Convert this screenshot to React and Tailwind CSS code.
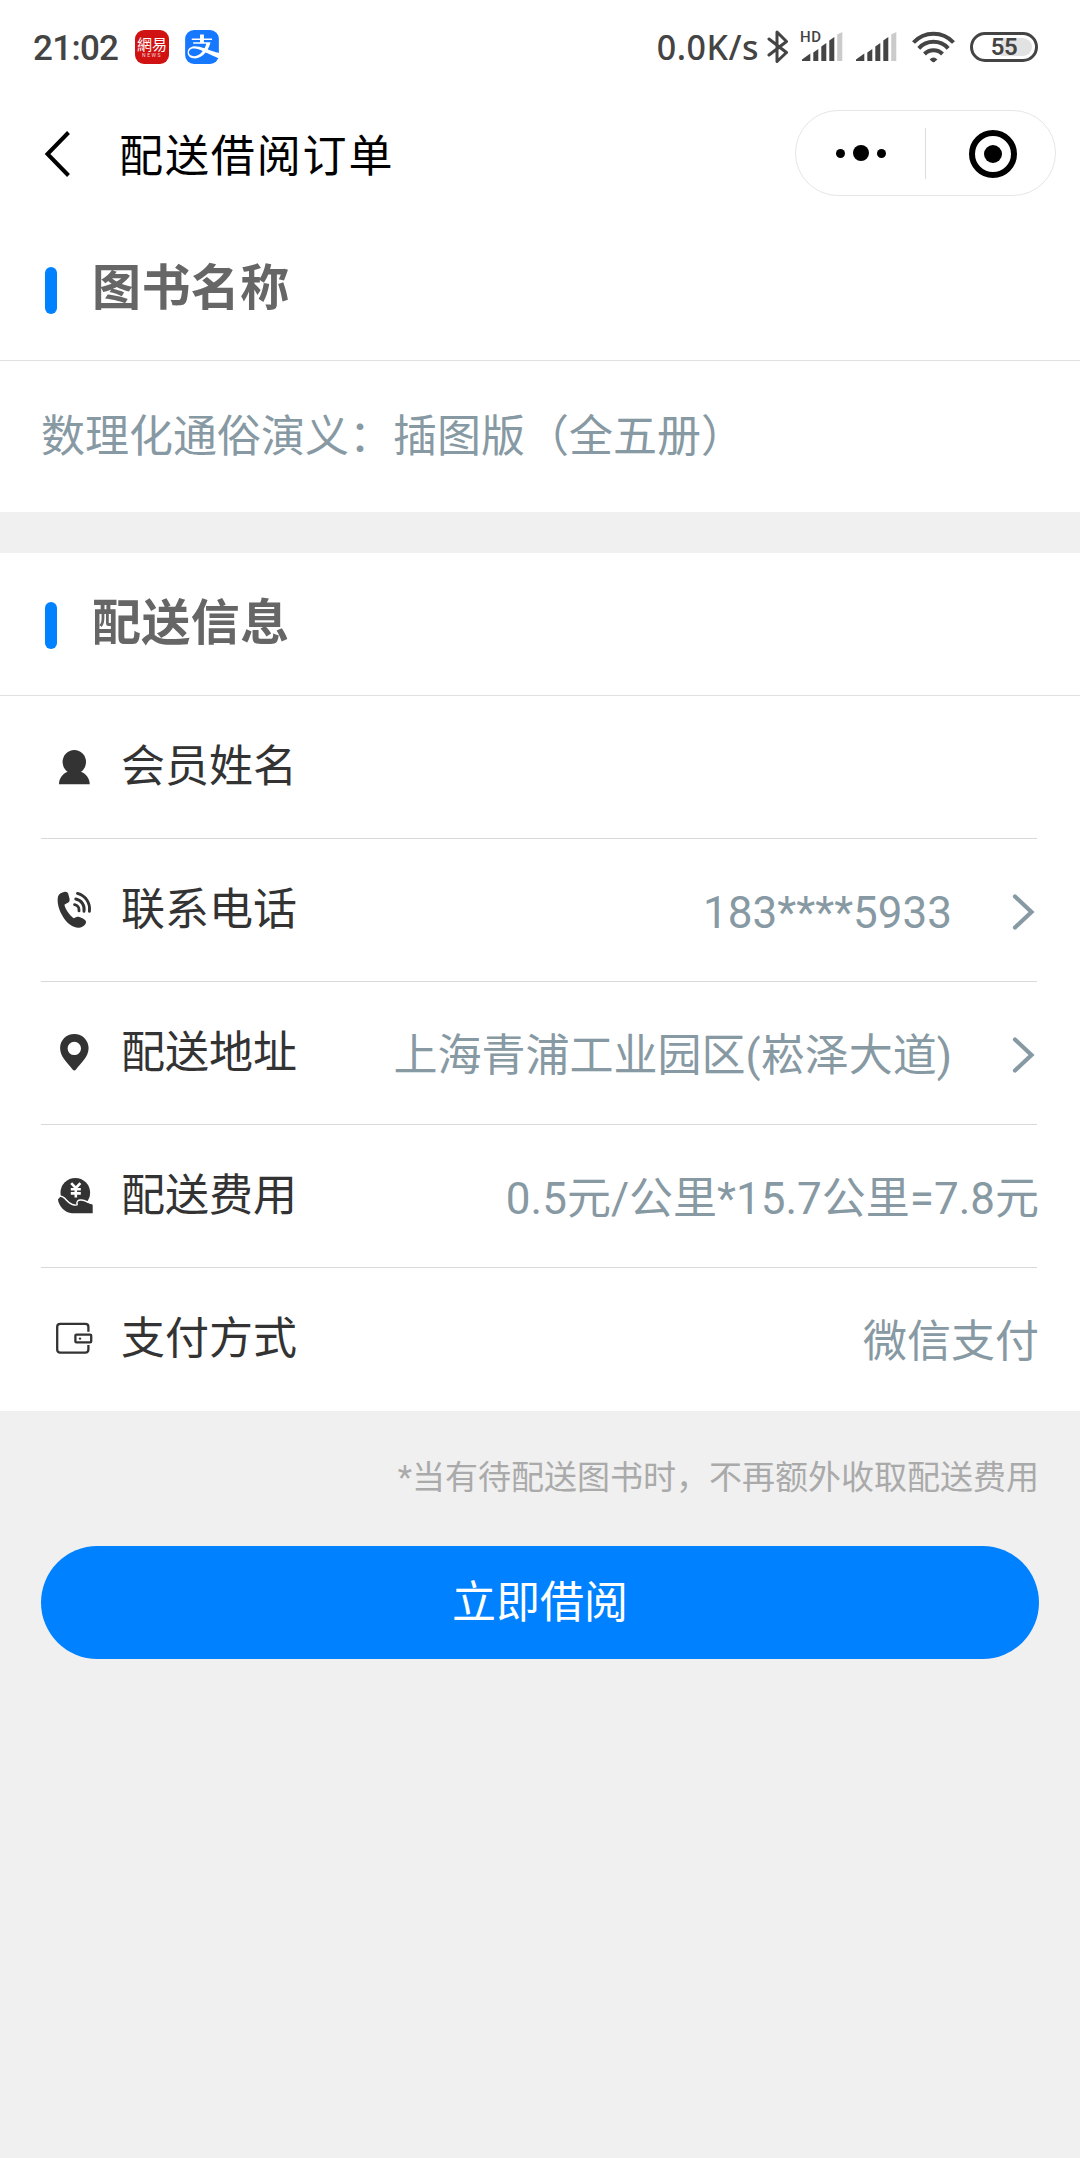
import React from "react";
import { SiAlipay } from "react-icons/si";

const SignalBars = () => (
  <svg width="41" height="30" viewBox="0 0 41 30" fill="#444">
    <path d="M0 29V27.5L8.3 21.5V29Z" />
    <path d="M11.3 29V20.5L16.3 17V29Z" />
    <path d="M19.3 29V14.5L24.3 11V29Z" />
    <path d="M27.3 29V8.5L32.3 5V29Z" />
    <path d="M35.2 29V2.5L40.3 0V29Z" fill="#cbcbcb" />
  </svg>
);

const StatusBar = () => (
  <div className="flex h-[94px] items-center pr-[42px] pl-[33px] text-[#444]">
    <span className="mt-[2px] w-[102px] font-['Roboto'] text-[35px] leading-none font-medium tracking-[-0.7px]">21:02</span>
    <div className="flex h-[34px] w-[34px] flex-col items-center rounded-[9px] bg-[#d01212] pt-[4px] text-white">
      <span className="font-['Noto_Sans_CJK_TC',sans-serif] text-[15px] leading-[19px] whitespace-nowrap">網易</span>
      <span className="mt-[-1px] text-[5px] leading-[6px] tracking-[1.5px] opacity-80">NEWS</span>
    </div>
    <div className="ml-4 h-[34px] w-[34px] overflow-hidden rounded-[9px]">
      <SiAlipay size={34} color="#1677ff" />
    </div>
    <span className="ml-auto font-['Noto_Sans'] text-[34px] leading-none font-medium tracking-[0.5px]">0.0K/s</span>
    <svg className="ml-[8px]" width="22" height="34" viewBox="0 0 22 34" fill="none" stroke="#444" strokeWidth="3" strokeLinejoin="round" strokeLinecap="round">
      <path d="M2 9L19.5 22.5L10 31.5V2L19.5 11.5L2 25" />
    </svg>
    <div className="relative ml-[13px] flex">
      <span className="absolute -top-[3px] -left-[2px] font-['Roboto'] text-[15px] leading-4 font-medium tracking-[0.5px]">HD</span>
      <SignalBars />
    </div>
    <div className="ml-[13px] flex">
      <SignalBars />
    </div>
    <svg className="ml-[15px]" width="43" height="32" viewBox="0 0 43 32" fill="none" stroke="#444" strokeWidth="4" strokeLinecap="butt">
      <path d="M1.5 11.5A27 27 0 0 1 41.5 11.5" />
      <path d="M6.8 17.3A20 20 0 0 1 36.2 17.3" />
      <path d="M12.5 23A12.5 12.5 0 0 1 30.5 23" />
      <path d="M17.6 28.4Q21.5 24.4 25.4 28.4L22.5 31Q21.5 31.7 20.5 31Z" fill="#444" stroke="none" />
    </svg>
    <div className="ml-[15px] flex h-[30px] w-[68px] items-center justify-center rounded-full border-[3px] border-[#444] bg-[linear-gradient(90deg,#fff_45%,#e2e2e2_45%)] bg-clip-content p-[3px] font-['Roboto'] text-[24px] leading-none font-semibold tracking-[-0.5px]">
      55
    </div>
  </div>
);

const NavBar = () => (
  <div className="flex h-[123px] items-start pr-[24px] pl-[44px]">
    <svg className="mt-[37px]" width="28" height="46" viewBox="0 0 28 46" fill="none" stroke="#000" strokeWidth="4">
      <path d="M24.5 1.5L3.5 23L24.5 44.5" />
    </svg>
    <h1 className="mt-[31px] ml-[47px] text-[44px] leading-[64px] tracking-[1.9px] text-black">配送借阅订单</h1>
    <div className="mt-[16px] ml-auto flex h-[86px] w-[261px] items-center rounded-full border border-[#e6e6e6]">
      <div className="flex w-[129px] items-center justify-center gap-2">
        <i className="h-[9px] w-[9px] rounded-full bg-black" />
        <i className="h-4 w-4 rounded-full bg-black" />
        <i className="h-[9px] w-[9px] rounded-full bg-black" />
      </div>
      <div className="h-[51px] w-px bg-[#dcdcdc]" />
      <div className="flex flex-1 justify-center pt-[2px] pl-[5px]">
        <div className="flex h-12 w-12 items-center justify-center rounded-full border-[6px] border-black">
          <i className="h-[18px] w-[18px] rounded-full bg-black" />
        </div>
      </div>
    </div>
  </div>
);

const SectionTitle = ({ children }) => (
  <div className="flex h-[143px] items-center border-b border-[#e0e0e0] pl-[45px]">
    <i className="mt-[3px] h-[47px] w-[12px] rounded-full bg-[#0081ff]" />
    <h2 className="ml-[35px] text-[49px] leading-[72px] font-bold tracking-[0.4px] text-[#666]">{children}</h2>
  </div>
);

const Icon = ({ children }) => (
  <svg width="44" height="44" viewBox="0 0 44 44" fill="#333">
    {children}
  </svg>
);

const PersonIcon = () => (
  <Icon>
    <ellipse cx="20.3" cy="16.9" rx="11.7" ry="12" />
    <path d="M5 39.2C5 33.5 8.5 28.5 14 26.5H26.6C32 28.5 35.7 33.5 35.7 39.2Z" />
  </Icon>
);

const PhoneIcon = () => (
  <Icon>
    <path d="M10 4C12 3.4 13.6 4 14.3 6L15.6 11C15.9 13 15 14.4 13.3 15L10.4 16.8C11.4 21 15 27 19.6 30.2L22.6 29C25 28.2 31 31 32 33.5C32.5 35.8 29 39.5 25 39.7C19 40 12 35 8 27C4 20 3 13 4 8.5C5 5.5 8 4.3 10 4Z" />
    <g fill="none" stroke="#333" strokeWidth="2.9" strokeLinecap="round">
      <path d="M23.5 5.4C31.5 7.5 36.5 15 35.4 23.2" />
      <path d="M21.8 11C27.5 12 31 17.5 30 23.2" />
      <path d="M20.6 16.6C23.6 17.2 25.4 19.8 25 22.8" />
    </g>
  </Icon>
);

const PinIcon = () => (
  <Icon>
    <path fillRule="evenodd" d="M20.3 3C12.4 3 6.1 9.2 6.1 17C6.1 25.5 13 31.5 18.6 38.4Q20.3 40.4 22 38.4C27.6 31.5 34.6 25.5 34.6 17C34.6 9.2 28.2 3 20.3 3ZM20.3 10.7A6.7 6.7 0 1 1 20.3 24.1A6.7 6.7 0 1 1 20.3 10.7Z" />
  </Icon>
);

// Top edge of the palm and thumb, shared by the filled hand and its gap from the coin
const PALM = "M4 25.5C4 22.6 7 22.4 9.8 24.6C12.2 26.8 13.5 29.6 17.5 31C20 31.8 22 32.4 22.8 31.6C22 28.6 23.4 26.4 27 26.8C31.5 27.2 34 29.6 38.7 30.6";

const FeeIcon = () => (
  <Icon>
    <circle cx="21.3" cy="18.7" r="14.8" />
    <path d="M17.2 9.2L21.8 14L26.4 9.2M16.8 15.2H26.8M16.8 19.4H26.8M21.8 14V23.6" fill="none" stroke="#fff" strokeWidth="2.6" />
    <path d={PALM + "V39.3H18C10.5 38.8 4.4 31.5 4 25.5Z"} />
    <path d={PALM} transform="translate(0.3 -0.8)" fill="none" stroke="#fff" strokeWidth="1.5" />
  </Icon>
);

const WalletIcon = () => (
  <Icon>
    <g fill="none" stroke="#333" strokeWidth="2.3">
      <path d="M34.4 14.8V9.8Q34.4 6.8 31.4 6.8H6.2Q3.2 6.8 3.2 9.8V32.6Q3.2 35.6 6.2 35.6H31.4Q34.4 35.6 34.4 32.6V28" />
      <rect x="21.4" y="17.6" width="15.8" height="7.8" rx="1" />
    </g>
    <circle cx="26" cy="21.6" r="1.2" />
  </Icon>
);

const rows = [
  { icon: PersonIcon, label: "会员姓名", value: "" },
  { icon: PhoneIcon, label: "联系电话", value: "183****5933", arrow: true },
  { icon: PinIcon, label: "配送地址", value: "上海青浦工业园区(崧泽大道)", arrow: true },
  { icon: FeeIcon, label: "配送费用", value: "0.5元/公里*15.7公里=7.8元" },
  { icon: WalletIcon, label: "支付方式", value: "微信支付" },
];

const Row = ({ icon: RowIcon, label, value, arrow, last }) => (
  <div className={"mr-[43px] ml-[41px] flex h-[143px] items-center border-b pl-[13px] " + (last ? "border-transparent" : "border-[#d9d9d9]")}>
    <RowIcon />
    <span className="ml-[23px] text-[44px] leading-[64px] text-[#333]">{label}</span>
    <span className="mt-[6px] -mr-[2px] ml-auto text-[44px] leading-[64px] whitespace-nowrap text-[#8799a3]">{value}</span>
    {arrow && (
      <svg className="mt-[4px] mr-[1px] ml-[62px]" width="24" height="38" viewBox="0 0 24 38" fill="none" stroke="#8799a3" strokeWidth="4.2" strokeLinecap="round" strokeLinejoin="miter">
        <path d="M3 3.5L19.5 19L3 34.5" />
      </svg>
    )}
  </div>
);

export default function App() {
  return (
    <div className="min-h-[2158px] w-[1080px] bg-[#f0f0f0] font-['Roboto','Noto_Sans_CJK_SC',sans-serif]">
      <div className="bg-white pb-px">
        <StatusBar />
        <NavBar />
        <div className="pt-px">
          <SectionTitle>图书名称</SectionTitle>
        </div>
        <p className="h-[150px] pt-[44px] pl-[41px] text-[44px] leading-[64px] text-[#8799a3]">数理化通俗演义：插图版（全五册）</p>
      </div>
      <div className="mt-[41px] bg-white">
        <SectionTitle>配送信息</SectionTitle>
        {rows.map((r, i) => (
          <Row key={r.label} {...r} last={i === rows.length - 1} />
        ))}
      </div>
      <p className="mt-[43px] mr-[41px] text-right text-[33px] leading-[48px] text-[#aaa]">*当有待配送图书时，不再额外收取配送费用</p>
      <button className="mt-[44px] ml-[41px] block h-[113px] w-[998px] rounded-full bg-[#0081ff] text-[44px] leading-none text-white">
        立即借阅
      </button>
    </div>
  );
}
